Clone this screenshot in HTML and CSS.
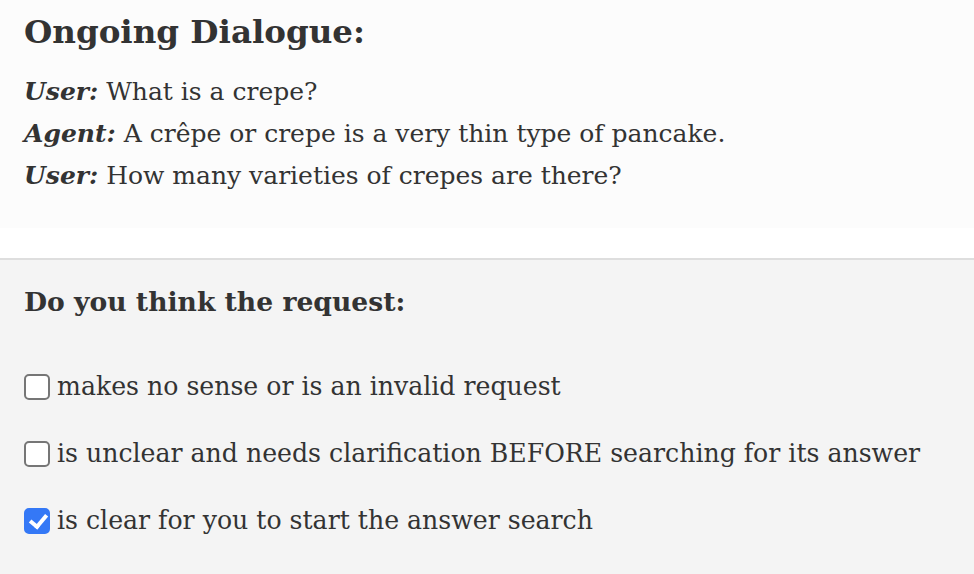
FILE: index.html
```html
<!DOCTYPE html>
<html>
<head>
<meta charset="utf-8">
<link rel="stylesheet" href="styles.css">
</head>
<body>
<section class="dialogue">
  <h2 class="title">Ongoing Dialogue:</h2>
  <div class="turns">
    <p class="turn"><b><i>User:</i></b> What is a crepe?</p>
    <p class="turn"><b><i>Agent:</i></b> A crêpe or crepe is a very thin type of pancake.</p>
    <p class="turn"><b><i>User:</i></b> How many varieties of crepes are there?</p>
  </div>
</section>
<div class="spacer"></div>
<section class="question">
  <h3 class="q-title">Do you think the request:</h3>
  <label class="option"><input type="checkbox" class="box"><span>makes no sense or is an invalid request</span></label>
  <label class="option"><input type="checkbox" class="box"><span>is unclear and needs clarification BEFORE searching for its answer</span></label>
  <label class="option"><input type="checkbox" class="box" checked><span>is clear for you to start the answer search</span></label>
</section>
</body>
</html>
```
FILE: styles.css
```css
html, body {
  margin: 0;
  padding: 0;
  background: #f4f4f4;
}
body {
  font-family: "DejaVu Serif", serif;
  color: #333333;
  height: 574px;
  overflow: hidden;
  display: flex;
  flex-direction: column;
}
.dialogue {
  background: #fcfcfc;
  padding: 12px 24px 0 24px;
  height: 216px;
  flex: none;
}
.title {
  margin: 0;
  font-size: 32.5px;
  font-weight: bold;
  line-height: 40px;
}
.turns {
  margin-top: 19px;
}
.turn {
  margin: 0;
  font-size: 25px;
  line-height: 42px;
}
.turn b {
  font-weight: bold;
}
.spacer {
  flex: none;
  height: 30px;
  background: #ffffff;
  border-bottom: 2px solid #dedede;
}
.question {
  flex: 1;
  background: #f4f4f4;
  padding: 22px 24px 0 24px;
}
.q-title {
  margin: 0 0 50px 0;
  font-size: 26.6px;
  font-weight: bold;
  line-height: 40px;
}
.option {
  display: flex;
  align-items: center;
  gap: 7px;
  font-size: 25.2px;
  line-height: 30px;
  margin-bottom: 37px;
}
.box {
  appearance: none;
  -webkit-appearance: none;
  margin: 0;
  width: 26px;
  height: 26px;
  border: 2px solid #767676;
  border-radius: 5px;
  background: #ffffff;
  flex: none;
  position: relative;
}
.box:checked {
  background: #3478f6;
  border-color: #3478f6;
}
.box:checked::after {
  content: "";
  position: absolute;
  left: 7px;
  top: 1px;
  width: 7px;
  height: 13px;
  border: solid #ffffff;
  border-width: 0 4px 4px 0;
  transform: rotate(40deg);
}
```
